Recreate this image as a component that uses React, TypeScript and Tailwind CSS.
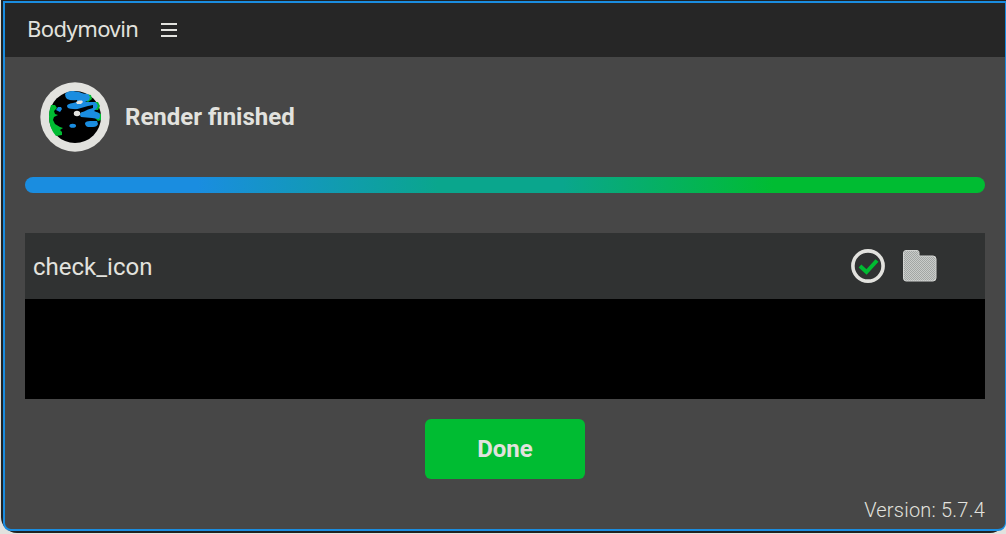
import React from "react";

function Logo() {
  return (
    <svg className="h-[70px] w-[70px] shrink-0" viewBox="0 0 70 70" aria-hidden="true">
      <circle cx="35" cy="35" r="34.7" fill="#e2e2de" />
      <circle cx="35" cy="35" r="26" fill="#000" />
      <path
        d="M11 23 15 23 17 26 14 29 15 32 18 33 14 35 13 38 15 42 20 45 23 46 20 48 22 50 22 53 16 54Q9 46 9 35Q9 28 11 23Z"
        fill="#00bc32"
      />
      <path d="M46 12 51 13 52 17 48 20 44 18Z" fill="#00bc32" />
      <path d="M54 20 58 20 60 24 58 28 55 28Z" fill="#00bc32" />
      <path d="M56 30 61 32 61 38 58 39 55 36Z" fill="#00bc32" />
      <path
        d="M25 12Q27 9 33 9L39 10Q43 12 48 12L50 15 49 18 45 20 55 20Q59 22 57 26L54 29 59 31Q61 34 59 37L52 36 41 35Q39 33 41 30L44 28 33 27Q27 27 27 24Q27 22 33 21L37 20 37 18Q31 19 27 17Q25 15 25 12Z"
        fill="#1a8de0"
      />
      <path d="M34 28 41 26 48 24 53 23 53 26 48 27.500 44 29.500 39 31Z" fill="#000" />
      <path d="M45 41Q46 39 50 39L57 39 58 42Q57 45 53 45L48 45Q45 44 45 41Z" fill="#1a8de0" />
      <ellipse cx="32.7" cy="43.7" rx="3.3" ry="2" fill="#1a8de0" />
      <path d="M16 28 18 25 21 25 22 27 20 30 18 29Z" fill="#1a8de0" />
      <path d="M36 20 39 18.500 42 18.500 43 20 41 22 37 22Z" fill="#e2e2de" />
      <ellipse cx="37" cy="31.500" rx="3.2" ry="2.8" fill="#e2e2de" />
    </svg>
  );
}

function CheckIcon() {
  return (
    <svg className="h-[34px] w-[34px]" viewBox="0 0 34 34" fill="none" aria-hidden="true">
      <circle cx="17" cy="17" r="15.1" stroke="#e2e2de" strokeWidth="3.6" />
      <path d="m9 17 6.500 6L26 11.500" stroke="#00bc32" strokeWidth="4" />
    </svg>
  );
}

function FolderIcon() {
  return (
    <svg className="h-8 w-[34px]" viewBox="0 0 34 32" aria-hidden="true">
      <defs>
        <pattern id="weave" width="2" height="2" patternUnits="userSpaceOnUse">
          <rect width="2" height="2" fill="#a2a6a4" />
          <path d="M0 0H1V1H0ZM1 1H2V2H1Z" fill="#c9ccca" />
        </pattern>
      </defs>
      <path
        d="M3 .5H14Q16 .5 16 2.500V6H30Q33 6 33 9V28Q33 31 30 31H3Q.5 31 .5 28V3Q.5.5 3 .5Z"
        fill="url(#weave)"
        stroke="#d0d2d0"
      />
    </svg>
  );
}

export default function App() {
  return (
    <div className="h-[534px] w-[1006px] overflow-hidden bg-[#e2e2de] pb-px pl-px font-['Roboto',sans-serif] text-[#e2e2de]">
      <div className="h-full rounded-b-[16px] bg-[#202223] pt-px pb-0.5 pl-0.5">
        <main className="flex h-[530px] flex-col overflow-hidden rounded-b-[8px] border-2 border-r border-[#1a8de0] bg-[#474747]">
          <header className="flex h-[54px] shrink-0 items-center bg-[#262626] pl-[22px]">
            <h1 className="w-[134px] pb-1 font-['Noto_Sans',sans-serif] text-[22px] leading-8 tracking-[-0.55px]">
              Bodymovin
            </h1>
            <button className="flex w-4 flex-col gap-1" aria-label="Menu">
              <span className="h-0.5 w-full bg-[#e2e2de]" />
              <span className="h-0.5 w-full bg-[#e2e2de]" />
              <span className="h-0.5 w-full bg-[#e2e2de]" />
            </button>
          </header>
          <div className="flex flex-1 flex-col pr-5 pl-5">
            <div className="mt-[25px] flex h-[70px] items-center gap-[15px] pl-[15px]">
              <Logo />
              <h2 className="text-2xl font-bold">Render finished</h2>
            </div>
            <div className="mt-[25px] h-4 shrink-0 rounded-full bg-[linear-gradient(90deg,#1a8de0_18%,#0aa68d_43%,#0aa68d_56%,#00bc32_78%)]" />
            <section className="mt-10 h-[166px] shrink-0 bg-black">
              <div className="flex h-[66px] items-center bg-[#303232] pr-12 pl-2">
                <span className="flex-1 pt-0.5 text-2xl">check_icon</span>
                <div className="flex items-center gap-[18px]">
                  <CheckIcon />
                  <FolderIcon />
                </div>
              </div>
            </section>
            <button className="mt-5 h-[60px] w-40 shrink-0 self-center rounded-[6px] bg-[#00bc32] text-2xl font-bold">
              Done
            </button>
            <p className="mt-[17px] text-right text-xl leading-7 font-light tracking-[0.22px]">Version: 5.7.4</p>
          </div>
        </main>
      </div>
    </div>
  );
}
